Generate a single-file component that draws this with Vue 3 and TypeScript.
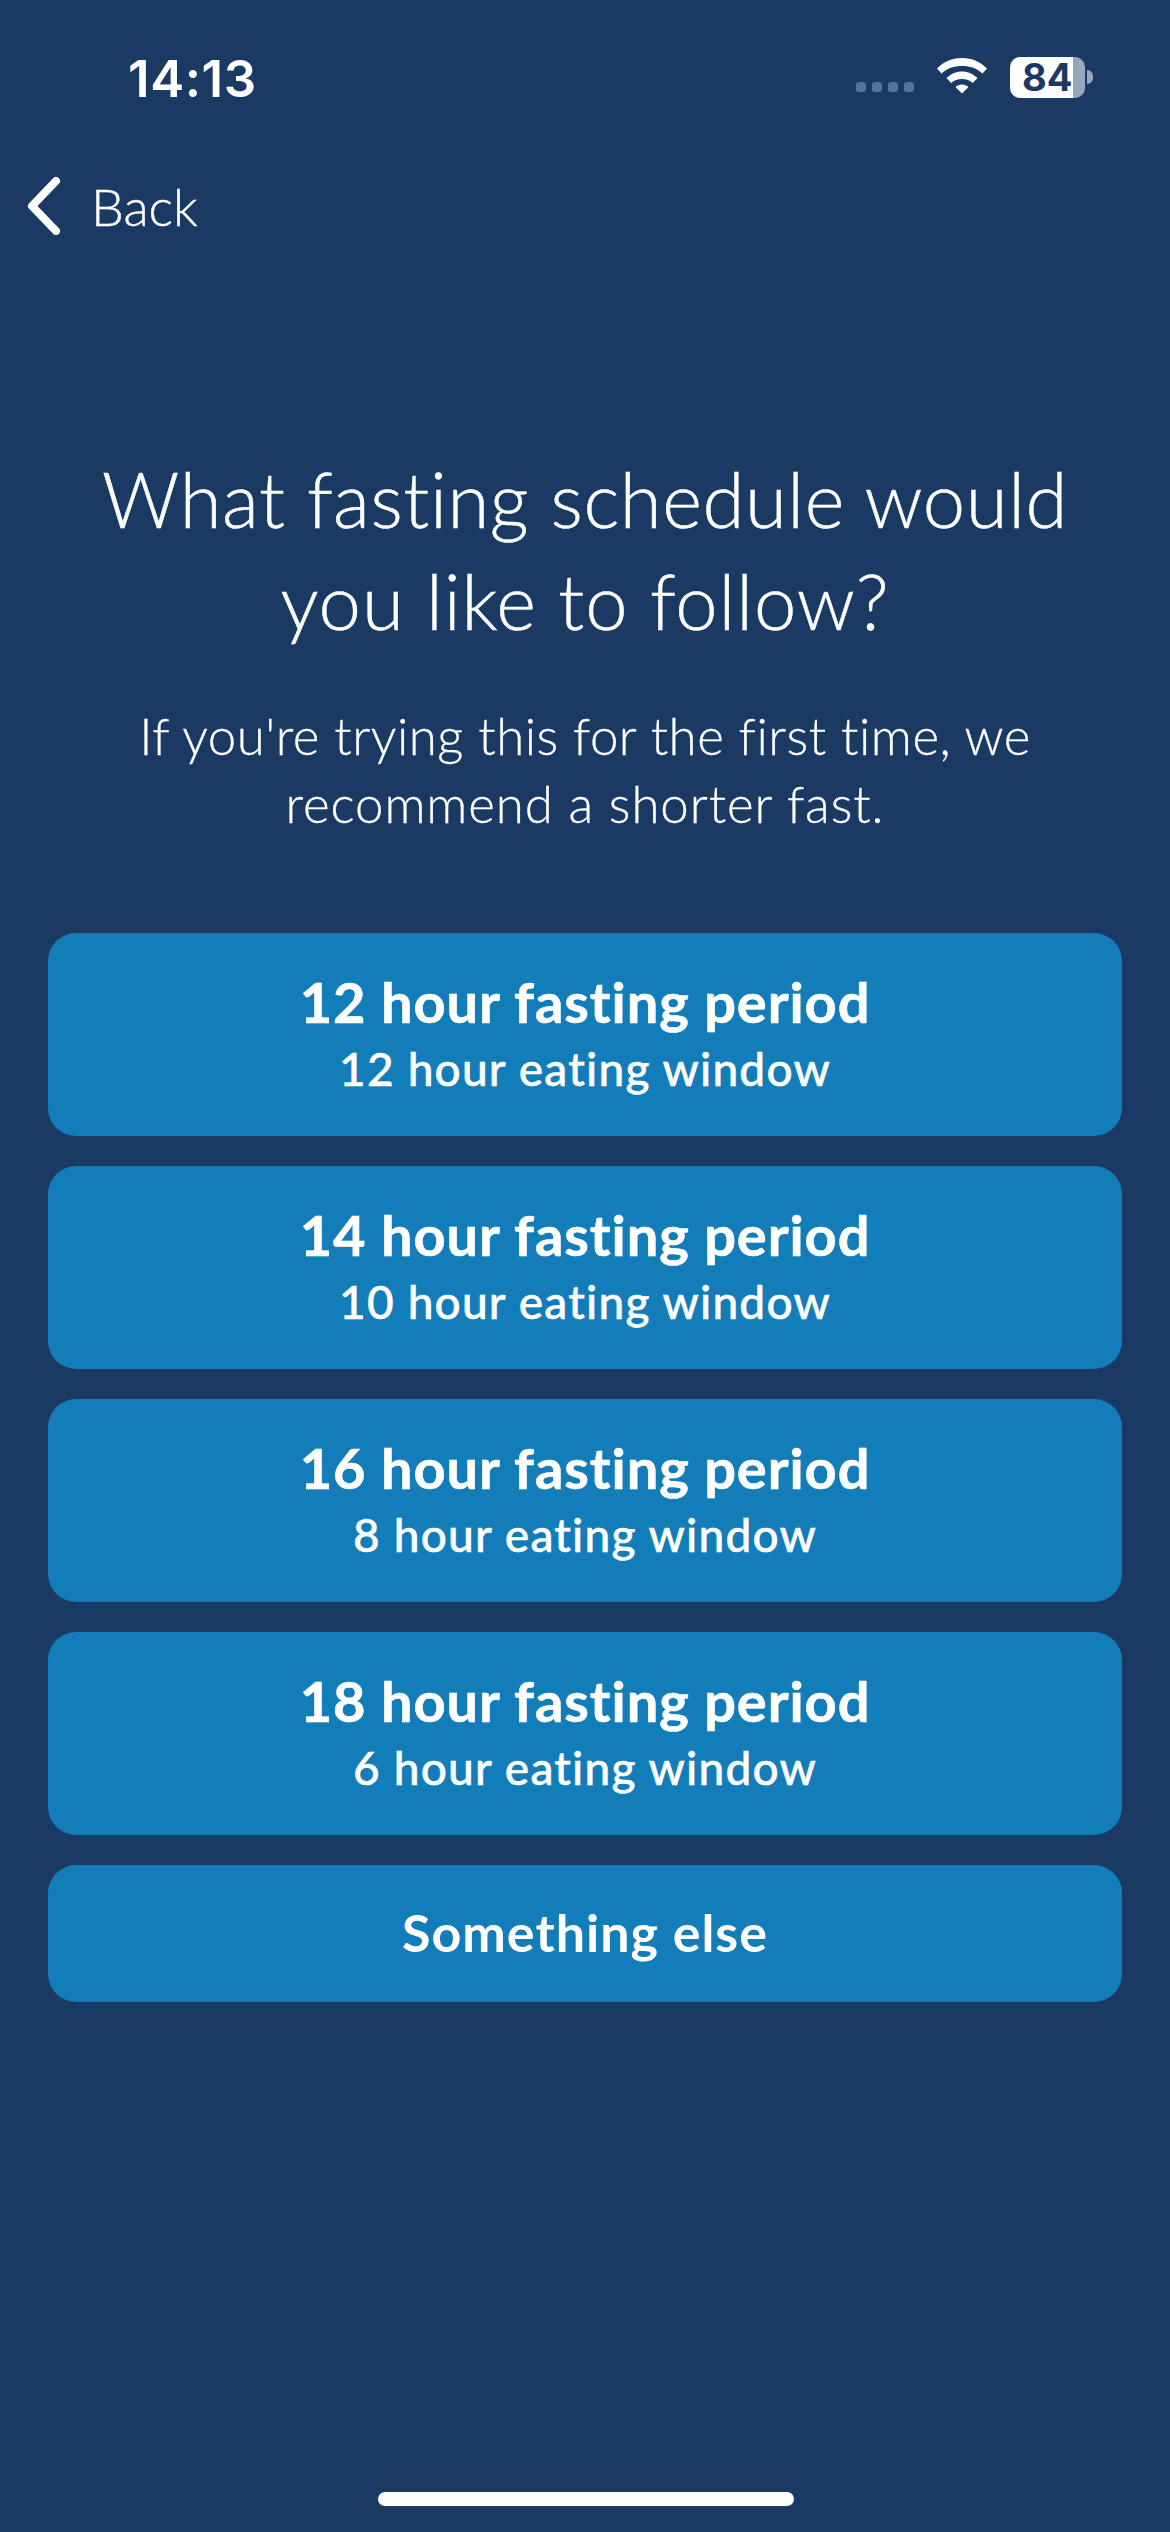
<script setup lang="ts">
interface Option {
  title: string
  sub?: string
}

const options: Option[] = [
  { title: '12 hour fasting period', sub: '12 hour eating window' },
  { title: '14 hour fasting period', sub: '10 hour eating window' },
  { title: '16 hour fasting period', sub: '8 hour eating window' },
  { title: '18 hour fasting period', sub: '6 hour eating window' },
  { title: 'Something else' },
]
</script>

<template>
  <div class="screen">
    <div class="status">
      <span class="time">14:13</span>
      <div class="status-right">
        <div class="signal"><i /><i /><i /><i /></div>
        <svg class="wifi" width="52" height="38" viewBox="0 0 52 38">
          <path d="M1 12.500C7.500 6 16 2 26 2S44.500 6 51 12.500L46.500 17.500C41 12.300 34 10 26 10S11 12.300 5.500 17.500Z" fill="#fff" />
          <path d="M10.500 22C14.500 18.200 20 15.500 26 15.500S37.500 18.200 41.500 22L36.800 27C34 24.300 30.200 23 26 23S18 24.300 15.200 27Z" fill="#fff" />
          <path d="M19.500 31C21.200 29.500 23.500 28.500 26 28.500S30.800 29.500 32.500 31L26 37.500Z" fill="#fff" />
        </svg>
        <div class="battery">
          <div class="battery-body">
            <span class="battery-level">84</span>
          </div>
          <div class="battery-cap" />
        </div>
      </div>
    </div>

    <div class="back">
      <svg class="chevron" width="34" height="58" viewBox="0 0 34 58">
        <path d="M29 4L5 29L29 54" fill="none" stroke="#fff" stroke-width="8" stroke-linecap="round" stroke-linejoin="round" />
      </svg>
      <span class="back-label">Back</span>
    </div>

    <h1 class="title">What fasting schedule would<br /><span class="title-second">you like to follow?</span></h1>
    <p class="subtitle">If you're trying this for the first time, we<br /><span class="subtitle-second">recommend a shorter fast.</span></p>

    <div class="options">
      <button v-for="o in options" :key="o.title" class="option" :class="{ 'option--single': !o.sub }">
        <span class="option-title">{{ o.title }}</span>
        <span v-if="o.sub" class="option-sub">{{ o.sub }}</span>
      </button>
    </div>

    <div class="home-bar" />
  </div>
</template>

<style>
html,
body {
  margin: 0;
  background: #1a3a63;
}
</style>

<style scoped>
.screen {
  position: relative;
  box-sizing: border-box;
  width: 1170px;
  height: 2532px;
  background: #1a3a63;
  color: #fff;
  font-family: Lato, 'Noto Sans', sans-serif;
  font-variant-ligatures: none;
  overflow: hidden;
}

.status {
  height: 177px;
  box-sizing: border-box;
  padding: 50px 77px 0 128px;
  display: flex;
  justify-content: space-between;
  align-items: flex-start;
}

.time {
  font-family: Inter, sans-serif;
  font-size: 51px;
  font-weight: 600;
  letter-spacing: 0.6px;
  line-height: 58px;
}

.status-right {
  display: flex;
  align-items: center;
  height: 48px;
  margin-top: 3px;
}

.signal {
  display: flex;
  gap: 6px;
  margin-top: 20px;
  margin-right: 22px;
}

.signal i {
  width: 10px;
  height: 10px;
  border-radius: 3px;
  background: #56719a;
}

.wifi {
  margin-right: 22px;
  margin-top: -4px;
}

.battery {
  display: flex;
  align-items: center;
}

.battery-body {
  width: 75px;
  height: 41px;
  border-radius: 10px;
  background: linear-gradient(90deg, #fff 0 84%, #98a7bc 84%);
  display: flex;
  align-items: center;
  padding-left: 12px;
  box-sizing: border-box;
}

.battery-level {
  font-family: Inter, sans-serif;
  font-size: 38px;
  font-weight: 700;
  color: #1a3a63;
  line-height: 41px;
}

.battery-cap {
  width: 6px;
  height: 14px;
  margin-left: 2px;
  border-radius: 0 7px 7px 0;
  background: #98a7bc;
}

.back {
  display: flex;
  align-items: center;
  height: 58px;
  padding-left: 27px;
  gap: 30px;
}

.back-label {
  font-size: 52px;
  font-weight: 300;
  line-height: 58px;
  -webkit-text-stroke: 0.4px #fff;
}

.title {
  margin: 213px 0 0;
  font-size: 76px;
  font-weight: 300;
  letter-spacing: 0.6px;
  line-height: 102px;
  text-align: center;
  -webkit-text-stroke: 0.5px #fff;
}

.title-second {
  letter-spacing: 0.9px;
}

.subtitle {
  margin: 50px 0 0;
  font-size: 51px;
  font-weight: 300;
  letter-spacing: 0.5px;
  line-height: 68px;
  text-align: center;
  -webkit-text-stroke: 0.3px #fff;
}

.subtitle-second {
  letter-spacing: 0.9px;
}

.options {
  margin: 95px 48px 0;
  display: flex;
  flex-direction: column;
  gap: 30px;
}

.option {
  height: 203px;
  border: 0;
  padding: 0;
  border-radius: 28px;
  background: #137dba;
  color: #fff;
  font-family: inherit;
  display: flex;
  flex-direction: column;
  align-items: center;
  justify-content: center;
}

.option--single {
  height: 137px;
  padding-bottom: 4px;
}

.option-title {
  font-size: 56px;
  font-weight: 700;
  letter-spacing: 0.9px;
  line-height: 68px;
  -webkit-text-stroke: 0.6px #fff;
}

.option--single .option-title {
  font-size: 52px;
  font-weight: 700;
  letter-spacing: 1px;
  -webkit-text-stroke: 0;
}

.option-sub {
  font-size: 46px;
  font-weight: 500;
  letter-spacing: 1.2px;
  line-height: 66px;
  -webkit-text-stroke: 0.5px #fff;
}

.home-bar {
  position: absolute;
  left: 378px;
  bottom: 26px;
  width: 416px;
  height: 14px;
  border-radius: 7px;
  background: #fff;
}
</style>
